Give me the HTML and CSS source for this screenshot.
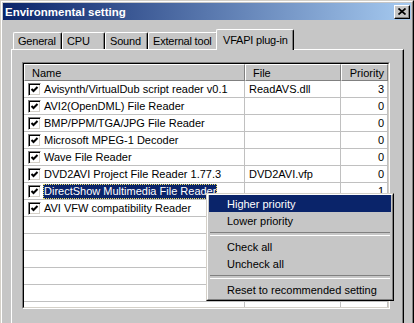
FILE: index.html
```html
<!DOCTYPE html>
<html lang="en">
<head>
    <meta charset="UTF-8">
    <meta name="viewport" content="width=device-width, initial-scale=1.0">
    <title>Environmental setting</title>
    <link rel="stylesheet" href="styles.css">
</head>
<body>

<div class="window">
    <div class="window-inner">
        <div class="titlebar">
            <span class="title">Environmental setting</span>
            <span class="close-btn">
                <svg width="8" height="7" viewBox="0 0 8 7"><path d="M0.5 0.5 L7.5 6.5 M7.5 0.5 L0.5 6.5" stroke="#000" stroke-width="1.7" fill="none"/></svg>
            </span>
        </div>

        <div class="content">
            <div class="tabs">
                <div class="tab tab-general">General</div>
                <div class="tab tab-cpu">CPU</div>
                <div class="tab tab-sound">Sound</div>
                <div class="tab tab-external">External tool</div>
                <div class="tab tab-vfapi active">VFAPI plug-in</div>
            </div>

            <div class="panel">
                <div class="list">
                    <div class="list-inner">
                        <div class="list-header">
                            <div class="hcell">Name</div>
                            <div class="hcell">File</div>
                            <div class="hcell right">Priority</div>
                        </div>

                        <div class="row">
                            <div class="cell name"><span class="check"></span><span class="label">Avisynth/VirtualDub script reader v0.1</span></div>
                            <div class="cell file">ReadAVS.dll</div>
                            <div class="cell prio">3</div>
                        </div>
                        <div class="row">
                            <div class="cell name"><span class="check"></span><span class="label">AVI2(OpenDML) File Reader</span></div>
                            <div class="cell file"></div>
                            <div class="cell prio">0</div>
                        </div>
                        <div class="row">
                            <div class="cell name"><span class="check"></span><span class="label">BMP/PPM/TGA/JPG File Reader</span></div>
                            <div class="cell file"></div>
                            <div class="cell prio">0</div>
                        </div>
                        <div class="row">
                            <div class="cell name"><span class="check"></span><span class="label">Microsoft MPEG-1 Decoder</span></div>
                            <div class="cell file"></div>
                            <div class="cell prio">0</div>
                        </div>
                        <div class="row">
                            <div class="cell name"><span class="check"></span><span class="label">Wave File Reader</span></div>
                            <div class="cell file"></div>
                            <div class="cell prio">0</div>
                        </div>
                        <div class="row">
                            <div class="cell name"><span class="check"></span><span class="label">DVD2AVI Project File Reader 1.77.3</span></div>
                            <div class="cell file">DVD2AVI.vfp</div>
                            <div class="cell prio">0</div>
                        </div>
                        <div class="row">
                            <div class="cell name"><span class="check"></span><span class="label selected">DirectShow Multimedia File Reader</span></div>
                            <div class="cell file"></div>
                            <div class="cell prio">1</div>
                        </div>
                        <div class="row">
                            <div class="cell name"><span class="check"></span><span class="label">AVI VFW compatibility Reader</span></div>
                            <div class="cell file"></div>
                            <div class="cell prio"></div>
                        </div>
                        <div class="row"><div class="cell"></div><div class="cell"></div><div class="cell"></div></div>
                        <div class="row"><div class="cell"></div><div class="cell"></div><div class="cell"></div></div>
                        <div class="row"><div class="cell"></div><div class="cell"></div><div class="cell"></div></div>
                        <div class="row"><div class="cell"></div><div class="cell"></div><div class="cell"></div></div>
                        <div class="row"><div class="cell"></div><div class="cell"></div><div class="cell"></div></div>
                        <div class="row"><div class="cell"></div><div class="cell"></div><div class="cell"></div></div>
                    </div>
                </div>
            </div>
        </div>
    </div>
</div>

<!-- Context menu -->
<div class="menu">
    <div class="menu-inner">
        <div class="menu-item hover">Higher priority</div>
        <div class="menu-item">Lower priority</div>
        <div class="menu-sep"></div>
        <div class="menu-item">Check all</div>
        <div class="menu-item">Uncheck all</div>
        <div class="menu-sep"></div>
        <div class="menu-item">Reset to recommended setting</div>
    </div>
</div>

</body>
</html>
```

FILE: styles.css
```css
* {
    box-sizing: border-box;
    margin: 0;
    padding: 0;
}
body {
    position: relative;
    width: 414px;
    height: 323px;
    overflow: hidden;
    font-family: "Liberation Sans", Arial, sans-serif;
    font-size: 11px;
    color: #000;
    background: #c6c6c6;
}
/* Window frame */
.window {
    width: 414px;
    height: 340px;
    background: #c6c6c6;
    border: 1px solid;
    border-color: #d4d0c8 #000 #000 #d4d0c8;
}
.window-inner {
    height: 100%;
    padding: 1px;
    border: 1px solid;
    border-color: #fff #808080 #808080 #fff;
}
.titlebar {
    height: 17px;
    display: flex;
    align-items: center;
    justify-content: space-between;
    padding: 0 1px 0 2px;
    background: linear-gradient(to right, #0a246a, #a6caf0);
}
.title {
    color: #fff;
    font-weight: bold;
    font-size: 11.5px;
}
.close-btn {
    width: 16px;
    height: 14px;
    display: flex;
    align-items: center;
    justify-content: center;
    background: #c6c6c6;
    border: 1px solid;
    border-color: #fff #000 #000 #fff;
    box-shadow: inset -1px -1px 0 #808080;
}
/* Tabs */
.content {
    padding: 9px 7px 0 8px;
}
.tabs {
    display: flex;
    height: 20px;
    padding-left: 2px;
    position: relative;
    z-index: 1;
}
.tab {
    flex: none;
    height: 17px;
    margin-top: 3px;
    padding-left: 4px;
    display: flex;
    align-items: center;
    background: #c6c6c6;
    border-top: 1px solid #fff;
    border-left: 1px solid #fff;
    border-right: 1px solid #000;
    border-radius: 2px 2px 0 0;
    box-shadow: inset -1px 0 0 #808080;
    white-space: nowrap;
    letter-spacing: -0.2px;
}
.tab-general { width: 49px; }
.tab-cpu { width: 43px; }
.tab-sound { width: 43px; }
.tab-external { width: 70px; }
.tab-vfapi { width: 78px; }
.tab.active {
    height: 21px;
    margin-top: 0;
    margin-left: -2px;
    padding-left: 6px;
    padding-bottom: 1px;
}
.panel {
    height: 300px;
    padding: 12px 0 0 10px;
    border-top: 1px solid #fff;
    border-left: 1px solid #fff;
    border-right: 1px solid #000;
    box-shadow: inset -1px 0 0 #808080;
}
/* List view */
.list {
    width: 368px;
    height: 247px;
    border: 1px solid;
    border-color: #808080 #fff #fff #808080;
    background: #fff;
}
.list-inner {
    height: 100%;
    overflow: hidden;
    border: 1px solid;
    border-color: #000 #d4d0c8 #d4d0c8 #000;
}
.list-header, .row {
    display: grid;
    grid-template-columns: 221px 96px 47px;
    height: 17px;
}
.hcell {
    display: flex;
    align-items: center;
    padding-left: 7px;
    background: #c6c6c6;
    border: 1px solid;
    border-color: #fff #808080 #808080 #fff;
}
.hcell.right {
    justify-content: flex-end;
    padding-right: 3px;
}
.cell {
    display: flex;
    align-items: center;
    border-right: 1px solid #c0c0c0;
    border-bottom: 1px solid #c0c0c0;
    white-space: nowrap;
    overflow: hidden;
}
.cell.name {
    padding-left: 4px;
    gap: 2px;
    overflow: visible;
}
.cell.file {
    padding-left: 4px;
}
.cell.prio {
    justify-content: flex-end;
    padding-right: 3px;
}
.check {
    flex: none;
    width: 13px;
    height: 13px;
    border: 1px solid;
    border-color: #808080 #fff #fff #808080;
    box-shadow: inset 1px 1px 0 #000, inset -1px -1px 0 #d4d0c8;
    background: #fff url("data:image/svg+xml,%3Csvg xmlns='http://www.w3.org/2000/svg' width='11' height='11'%3E%3Cpath d='M2.5 5 L4.5 7 L8.5 3' stroke='%23000' stroke-width='2' fill='none'/%3E%3C/svg%3E") center no-repeat;
}
.label {
    padding: 0 1px;
    line-height: 15px;
}
.label.selected {
    color: #fff;
    background: #0a246a;
    outline: 1px dotted #f0e060;
    outline-offset: -1px;
}
/* Context menu */
.menu {
    position: absolute;
    left: 206px;
    top: 193px;
    width: 188px;
    background: #c6c6c6;
    border: 1px solid;
    border-color: #d4d0c8 #000 #000 #d4d0c8;
    z-index: 10;
}
.menu-inner {
    padding: 0 1px 1px;
    border: 1px solid;
    border-color: #fff #808080 #808080 #fff;
}
.menu-item {
    height: 17px;
    display: flex;
    align-items: center;
    padding-left: 18px;
    white-space: nowrap;
}
.menu-item.hover {
    color: #fff;
    background: #0a246a;
}
.menu-sep {
    height: 9px;
    margin: 0 1px;
    padding-top: 3px;
}
.menu-sep::before {
    content: "";
    display: block;
    height: 2px;
    border-top: 1px solid #808080;
    border-bottom: 1px solid #fff;
}
```
